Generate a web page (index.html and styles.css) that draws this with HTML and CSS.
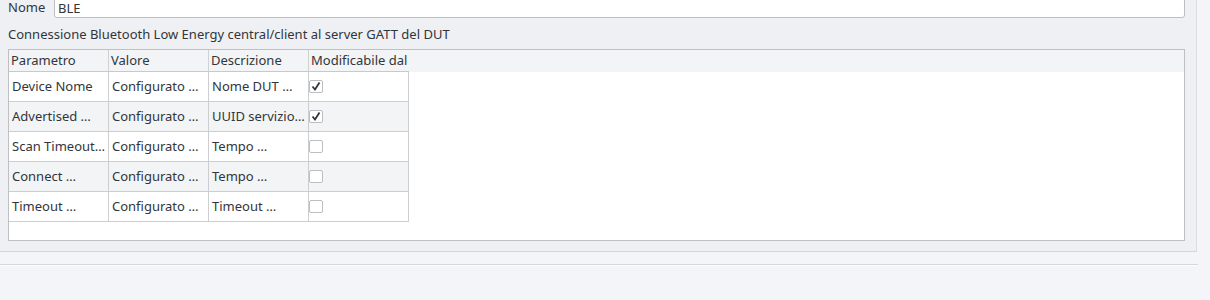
FILE: index.html
```html
<!DOCTYPE html>
<html lang="it">
<head>
<meta charset="utf-8">
<link rel="stylesheet" href="styles.css">
</head>
<body>
<div class="panel">
  <div class="name-row">
    <span class="label">Nome</span>
    <div class="input">BLE</div>
  </div>
  <div class="desc">Connessione Bluetooth Low Energy central/client al server GATT del DUT</div>
  <div class="frame">
    <div class="header">
      <div class="hcell">Parametro</div>
      <div class="hcell">Valore</div>
      <div class="hcell">Descrizione</div>
      <div class="hcell">Modificabile dal</div>
    </div>
    <div class="row">
      <div class="cell">Device Nome</div>
      <div class="cell">Configurato …</div>
      <div class="cell">Nome DUT …</div>
      <div class="cell chk"><span class="box"><svg width="12" height="11" viewBox="0 0 12 11"><path d="M2.5 5.5 L5 8.5 L9.5 1.5" fill="none" stroke="#31363b" stroke-width="1.8"/></svg></span></div>
    </div>
    <div class="row alt">
      <div class="cell">Advertised …</div>
      <div class="cell">Configurato …</div>
      <div class="cell">UUID servizio…</div>
      <div class="cell chk"><span class="box"><svg width="12" height="11" viewBox="0 0 12 11"><path d="M2.5 5.5 L5 8.5 L9.5 1.5" fill="none" stroke="#31363b" stroke-width="1.8"/></svg></span></div>
    </div>
    <div class="row">
      <div class="cell">Scan Timeout…</div>
      <div class="cell">Configurato …</div>
      <div class="cell">Tempo …</div>
      <div class="cell chk"><span class="box"></span></div>
    </div>
    <div class="row alt">
      <div class="cell">Connect …</div>
      <div class="cell">Configurato …</div>
      <div class="cell">Tempo …</div>
      <div class="cell chk"><span class="box"></span></div>
    </div>
    <div class="row">
      <div class="cell">Timeout …</div>
      <div class="cell">Configurato …</div>
      <div class="cell">Timeout …</div>
      <div class="cell chk"><span class="box"></span></div>
    </div>
  </div>
</div>
<div class="sep"></div>
</body>
</html>
```

FILE: styles.css
```css
html, body {
  margin: 0;
  padding: 0;
  background: #f4f5f8;
  font-family: "Noto Sans", "DejaVu Sans", sans-serif;
  font-size: 13px;
  color: #31363b;
  overflow: hidden;
}
.panel {
  display: flow-root;
  width: 1197px;
  height: 252px;
  box-sizing: border-box;
  background: #eff0f3;
  border-right: 1px solid #dcdde0;
  border-bottom: 1px solid #d5d6d9;
  padding: 0 11px 0 8px;
}
.name-row {
  display: flex;
  align-items: center;
  height: 24px;
  margin-top: -6px;
}
.label {
  width: 46px;
  line-height: 16px;
  padding-top: 2px;
}
.input {
  flex: 1;
  height: 24px;
  box-sizing: border-box;
  background: #fff;
  border: 1px solid #bcbec1;
  border-radius: 3px;
  padding: 5px 0 0 3px;
  line-height: 16px;
}
.desc {
  margin-top: 7px;
  line-height: 18px;
  height: 18px;
}
.frame {
  margin-top: 6px;
  height: 192px;
  box-sizing: border-box;
  border: 1px solid #bfc0c3;
  background: #fff;
}
.header {
  display: flex;
  height: 22px;
  background: #f3f4f6;
}
.hcell {
  width: 100px;
  box-sizing: border-box;
  border-right: 1px solid #d0d1d3;
  border-bottom: 1px solid #c8c9cb;
  padding: 2px 0 0 2px;
  line-height: 17px;
  white-space: nowrap;
  overflow: hidden;
}
.hcell:last-child {
  border-right: none;
}
.row {
  display: flex;
  width: 400px;
  height: 30px;
  background: #fff;
}
.row.alt {
  background: #f3f4f6;
}
.cell {
  width: 100px;
  box-sizing: border-box;
  border-right: 1px solid #cdced0;
  border-bottom: 1px solid #cdced0;
  padding: 0 0 1px 3px;
  display: flex;
  align-items: center;
  white-space: nowrap;
  overflow: hidden;
}
.cell.chk {
  padding: 0;
}
.box {
  width: 14px;
  height: 13px;
  box-sizing: border-box;
  border: 1px solid #bcbec1;
  border-radius: 2px;
  background: #fff;
  display: flex;
  align-items: center;
  justify-content: center;
}
.box svg {
  display: block;
}
.sep {
  width: 1198px;
  margin-top: 12px;
  height: 1px;
  background: #d6d7da;
  border-bottom: 1px solid #fdfdfe;
}
```
